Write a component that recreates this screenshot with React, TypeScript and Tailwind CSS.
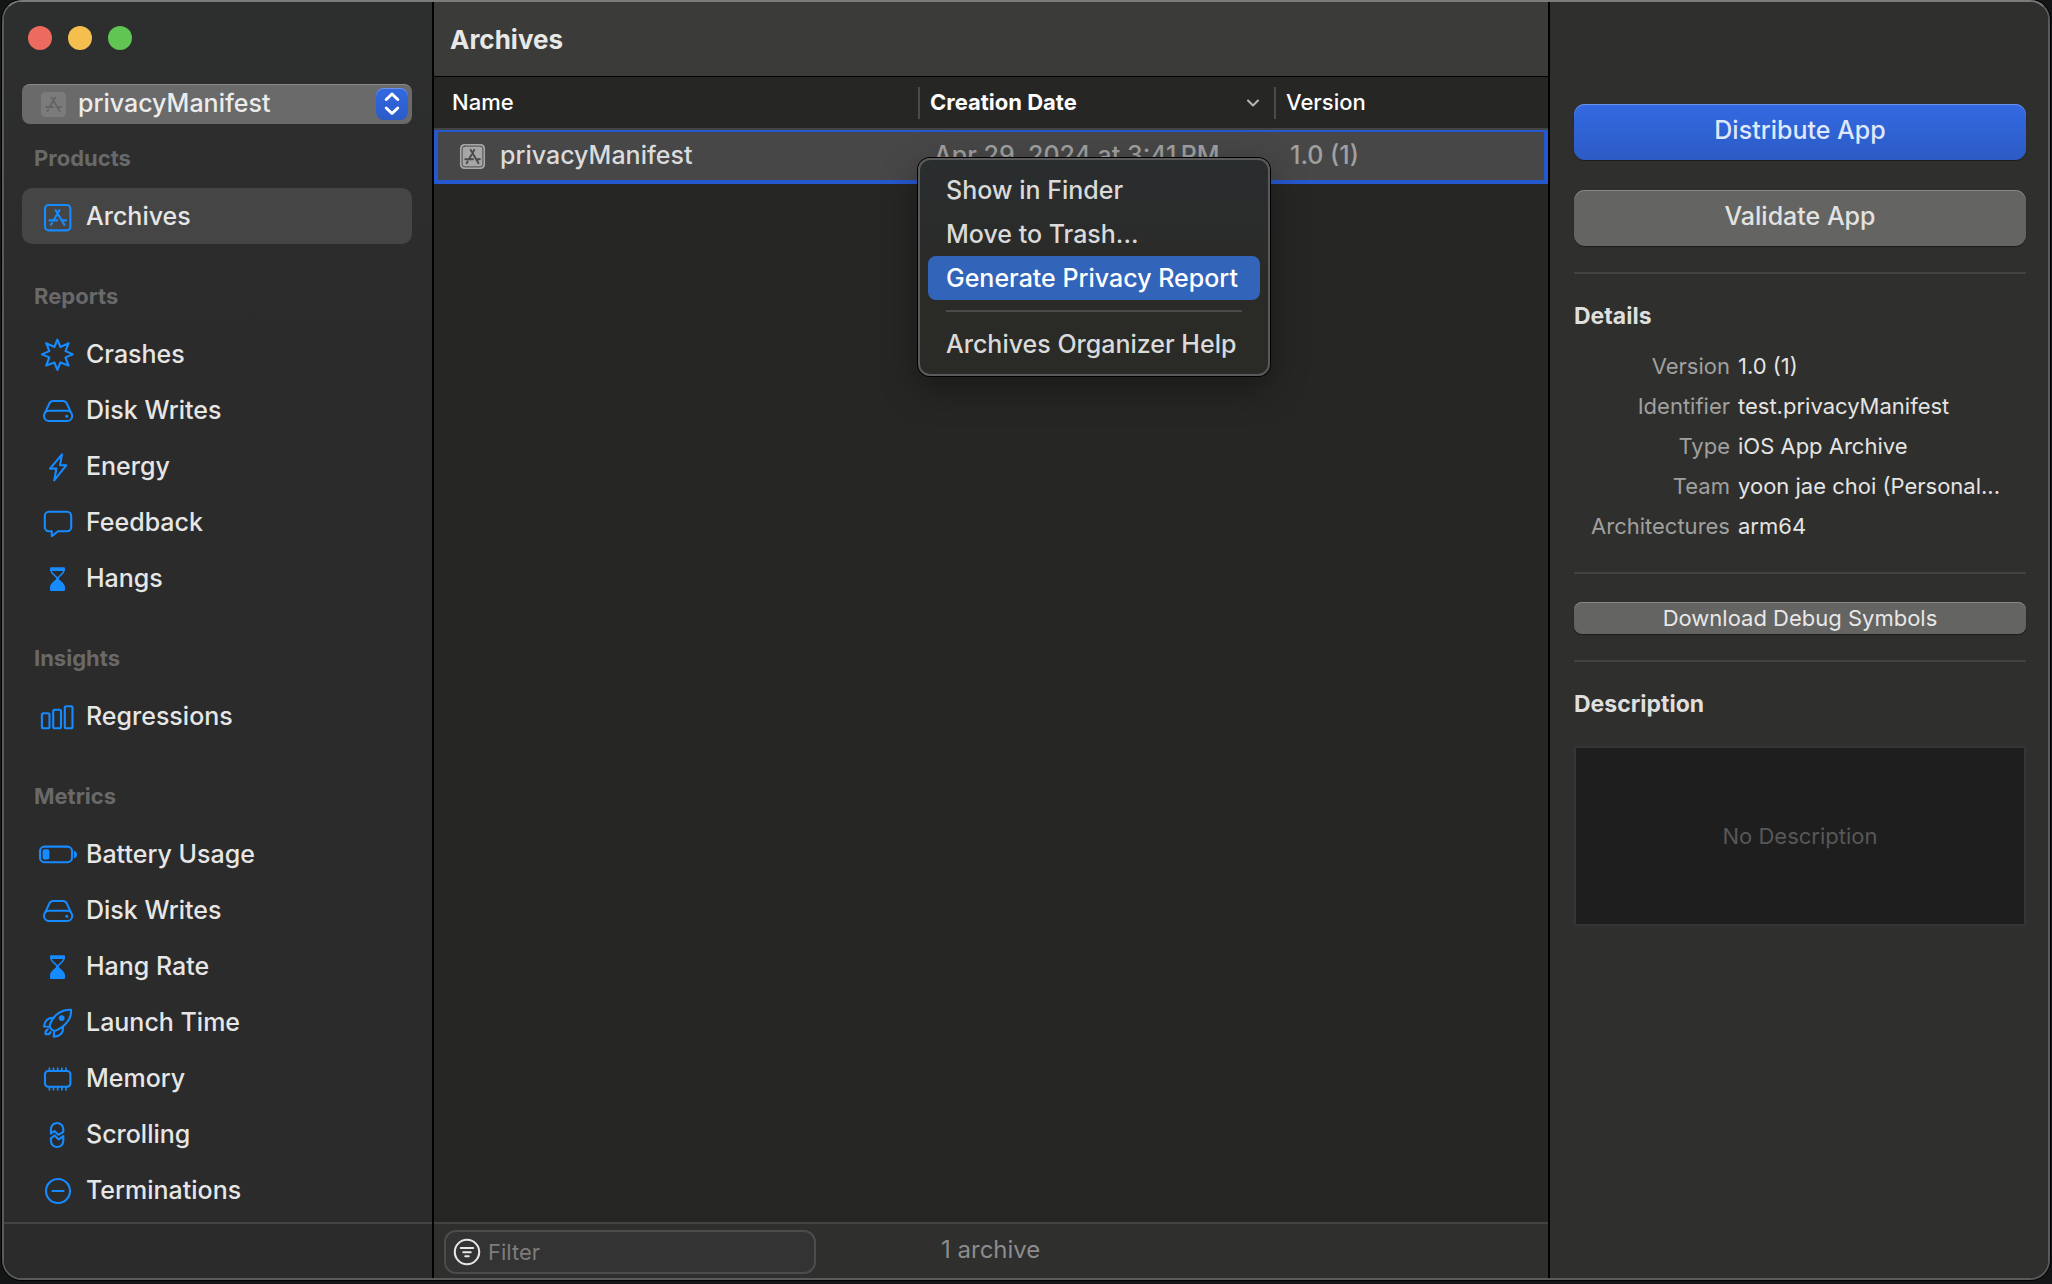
import { useState, type ReactNode } from 'react';
import { ChevronDown } from 'lucide-react';

type IconName =
  | 'archive'
  | 'burst'
  | 'disk'
  | 'bolt'
  | 'bubble'
  | 'hourglass'
  | 'bars'
  | 'battery'
  | 'rocket'
  | 'memory'
  | 'scroll'
  | 'minus';

const appGlyph = (
  <path d="M23.4 16.2 17.6 26.2M16 29.2l-1 1.6M19.7 16.2l8.6 14.6M13.4 26.4h7.8M25.6 26.4h4.4" />
);

const iconShapes: Record<IconName, ReactNode> = {
  archive: (
    <>
      <rect x="9" y="11" width="25.4" height="25.4" rx="3.5" />
      {appGlyph}
    </>
  ),
  burst: (
    <path d="M21.4 7.6l3 7.4 8.2-3.9-3.1 8 7.4 3.3-7.4 3 3.1 8.2-8.2-3.1-3 7.4-3-7.4-8.2 3.1 3.1-8.2-7.4-3 7.4-3.3-3.1-8 8.2 3.9z" />
  ),
  disk: (
    <>
      <rect x="8" y="22.8" width="28.2" height="10.2" rx="5.1" />
      <path d="M9.2 24.6 13.4 15.4Q14.5 13 17.2 13h9.8q2.7 0 3.8 2.4l4.2 9.2" />
      <circle cx="30.8" cy="28.2" r="1.5" fill="currentColor" stroke="none" />
    </>
  ),
  bolt: <path d="M26 10.4 14 24.6h6.4L18.2 36.4 30.4 21.2H24z" />,
  bubble: (
    <path d="M13 11.8h18a4.2 4.2 0 0 1 4.2 4.2v11a4.2 4.2 0 0 1-4.2 4.2h-9l-6.2 5v-5H13A4.2 4.2 0 0 1 8.8 27V16a4.2 4.2 0 0 1 4.2-4.2z" />
  ),
  hourglass: (
    <>
      <path d="M14 12.4q0-1.1 1.1-1.1h12.8q1.1 0 1.1 1.1V15H14z" fill="currentColor" stroke="none" />
      <path d="M15 14.6c0 4 6 5 6 8.2M28 14.6c0 4-6 5-6 8.2" strokeWidth="1.5" />
      <path
        d="M21.5 21.6c1.4 2.8 7.5 5.4 7.5 10V34q0 1.1-1.1 1.1H15.1q-1.1 0-1.1-1.1v-2.4c0-4.6 6.100-7.200 7.500-10z"
        fill="currentColor"
        stroke="none"
      />
    </>
  ),
  bars: (
    <>
      <rect x="5.9" y="19.2" width="7.6" height="15" rx="1.5" />
      <rect x="17.2" y="15.7" width="7.8" height="18.5" rx="1.5" />
      <rect x="28.8" y="12.2" width="7.7" height="22" rx="1.5" />
    </>
  ),
  battery: (
    <>
      <rect x="4" y="14.6" width="32" height="15.6" rx="4.5" />
      <rect x="6.6" y="17.2" width="6.8" height="10.4" rx="1.8" fill="currentColor" stroke="none" />
      <path d="M38 18.7c4 1 4 6.6 0 7.6z" fill="currentColor" stroke="none" />
    </>
  ),
  rocket: (
    <>
      <path d="M35 9.8c-8.600-.8-16 4.200-20 12.200-1.300 2.600-1.900 4.500-.6 6.200s3.200 3.200 5.400 2.400C29 26.800 35.800 19 35 9.800z" />
      <path d="M18 17.8c-5.600-.2-9.300 2.400-10 8.700l5.700.3M27 27.300c.5 5.500-3 9-9.300 9.400l.5-5.500" />
      <path d="M11.8 29.400c-2.300 1-2.600 2.800-2.300 4.800 2.200.3 4.600.1 5-2.200" />
      <circle cx="25.7" cy="18.1" r="2.9" fill="currentColor" stroke="none" />
    </>
  ),
  memory: (
    <>
      <rect x="9" y="15" width="25.4" height="15.8" rx="3.2" />
      <path
        d="M13.4 12.200v2.800M17.500 12.200v2.800M21.700 12.200v2.800M25.900 12.200v2.800M30 12.200v2.800M13.400 31v2.800M17.500 31v2.800M21.700 31v2.800M25.900 31v2.800M30 31v2.800"
        strokeWidth="1.7"
      />
    </>
  ),
  scroll: (
    <>
      <path d="M14.9 21.600v-4.400a6.200 6.200 0 0 1 12.400 0v2.800l-5 2.800-3.900-3.800z" />
      <path d="M14.900 26.400v2.400a6.200 6.200 0 0 0 12.400 0v-4.700l-4.600 3.300-4.100-4z" />
    </>
  ),
  minus: (
    <>
      <circle cx="22" cy="23" r="12" />
      <path d="M16.5 23h11" strokeWidth="2.2" />
    </>
  ),
};

function SidebarIcon({ name }: { name: IconName }) {
  return (
    <svg
      viewBox="0 0 44 44"
      className="h-11 w-11 shrink-0 text-[#168bff]"
      fill="none"
      stroke="currentColor"
      strokeWidth="2.1"
      strokeLinecap="round"
      strokeLinejoin="round"
      aria-hidden="true"
    >
      {iconShapes[name]}
    </svg>
  );
}

type Item = { id: string; label: string; icon: IconName };

const groups: { title: string; items: Item[] }[] = [
  {
    title: 'Products',
    items: [{ id: 'archives', label: 'Archives', icon: 'archive' }],
  },
  {
    title: 'Reports',
    items: [
      { id: 'crashes', label: 'Crashes', icon: 'burst' },
      { id: 'disk-reports', label: 'Disk Writes', icon: 'disk' },
      { id: 'energy', label: 'Energy', icon: 'bolt' },
      { id: 'feedback', label: 'Feedback', icon: 'bubble' },
      { id: 'hangs', label: 'Hangs', icon: 'hourglass' },
    ],
  },
  {
    title: 'Insights',
    items: [{ id: 'regressions', label: 'Regressions', icon: 'bars' }],
  },
  {
    title: 'Metrics',
    items: [
      { id: 'battery', label: 'Battery Usage', icon: 'battery' },
      { id: 'disk-metrics', label: 'Disk Writes', icon: 'disk' },
      { id: 'hang-rate', label: 'Hang Rate', icon: 'hourglass' },
      { id: 'launch', label: 'Launch Time', icon: 'rocket' },
      { id: 'memory', label: 'Memory', icon: 'memory' },
      { id: 'scrolling', label: 'Scrolling', icon: 'scroll' },
      { id: 'terminations', label: 'Terminations', icon: 'minus' },
    ],
  },
];

const details = [
  ['Version', '1.0 (1)'],
  ['Identifier', 'test.privacyManifest'],
  ['Type', 'iOS App Archive'],
  ['Team', 'yoon jae choi (Personal...'],
  ['Architectures', 'arm64'],
];

function Sidebar() {
  const [selected, setSelected] = useState('archives');

  return (
    <aside className="flex w-[430px] shrink-0 flex-col border-r-2 border-black bg-[#2b2b2b] bg-linear-to-b from-[#2d2f2e] to-[#2b2b2b] to-25%">
      {/* Window controls */}
      <div className="flex gap-4 px-6 pt-6">
        <button aria-label="Close" className="size-6 rounded-full bg-[#ec6a5e]" />
        <button aria-label="Minimize" className="size-6 rounded-full bg-[#f4bf4f]" />
        <button aria-label="Zoom" className="size-6 rounded-full bg-[#61c554]" />
      </div>

      {/* Product picker */}
      <div className="relative mt-[34px] mr-5 ml-[18px]">
        <select
          aria-label="Product"
          className="block h-10 w-full appearance-none rounded-lg border-t border-[#8a8b8a] bg-[#6a6a6a] pb-1 pl-14 text-[25px] leading-8 font-medium text-[#ececec]"
        >
          <option>privacyManifest</option>
        </select>
        <svg
          viewBox="8 10 27.4 27.4"
          className="pointer-events-none absolute top-2 left-[19px] size-[25px]"
          fill="none"
          stroke="#646464"
          strokeWidth="2"
          strokeLinecap="round"
          aria-hidden="true"
        >
          <rect x="8" y="10" width="27.4" height="27.4" rx="5" fill="#7b7b7b" stroke="none" />
          {appGlyph}
        </svg>
        <span className="pointer-events-none absolute top-1 right-1 flex size-8 items-center justify-center rounded-lg bg-linear-to-b from-[#3369e2] to-[#2b5bc8] shadow-[inset_0_1px_0_#6f93ea]">
          <svg
            viewBox="0 0 32 32"
            className="size-8"
            fill="none"
            stroke="white"
            strokeWidth="3"
            strokeLinecap="round"
            strokeLinejoin="round"
            aria-hidden="true"
          >
            <path d="M10.200 11.500 16 6l5.800 5.500M10.200 20 16 25.500l5.800-5.500" />
          </svg>
        </span>
      </div>

      <nav className="min-h-0 flex-1 overflow-hidden pr-5 pl-[18px]">
        {groups.map((group, i) => (
          <section key={group.title}>
            <h2
              className={`${i === 0 ? 'pt-[22px]' : 'pt-10'} pb-[18px] pl-3 text-[22px] leading-6 font-bold text-[#696969]`}
            >
              {group.title}
            </h2>
            {group.items.map((item) => (
              <button
                key={item.id}
                onClick={() => setSelected(item.id)}
                className={`flex h-14 w-full items-center gap-1.5 rounded-[10px] pl-3.5 text-left text-[25px] font-medium text-[#e6e6e6] ${
                  selected === item.id ? 'bg-[#444544]' : ''
                }`}
              >
                <SidebarIcon name={item.icon} />
                <span className="pt-0.5">{item.label}</span>
              </button>
            ))}
          </section>
        ))}
      </nav>
      <div className="h-14 shrink-0 border-t-2 border-[#434343]" />
    </aside>
  );
}

function ContextMenu() {
  const item =
    'h-11 w-full rounded-lg px-[18px] pt-0.5 text-left text-[25px] font-medium whitespace-nowrap';
  return (
    <div
      role="menu"
      className="absolute top-[156px] left-[484px] w-[352px] rounded-xl border-2 border-[#595a59] bg-linear-to-b from-[#2a2d2f] to-[#2a2b27] to-60% p-2 shadow-[0_0_0_1px_#000,0_12px_36px_rgba(0,0,0,0.35)]"
    >
      <button role="menuitem" className={`${item} text-[#dadada]`}>Show in Finder</button>
      <button role="menuitem" className={`${item} text-[#dadada]`}>Move to Trash...</button>
      <button role="menuitem" className={`${item} bg-[#3265ba] text-white`}>Generate Privacy Report</button>
      <hr className="mx-[18px] my-2.5 border-t-2 border-[#4a4b48]" />
      <button role="menuitem" className={`${item} text-[#dadada]`}>Archives Organizer Help</button>
    </div>
  );
}

function ArchiveList() {
  const th = 'h-[53px] border-b-2 border-[#434343] p-0 text-left';
  const td = 'h-[54px] border-t-2 border-b-4 border-[#2558cf] bg-[#474747] p-0';
  return (
    <main className="relative flex min-w-0 flex-1 flex-col bg-[#262625]">
      <header className="flex h-[75px] shrink-0 items-center border-b border-black bg-[#3b3b39] px-4">
        <h1 className="text-[26px] font-bold text-[#e8e8e7]">Archives</h1>
      </header>

      <div className="min-h-0 flex-1">
        <table className="w-full table-fixed border-separate border-spacing-0">
          <colgroup>
            <col className="w-[484px]" />
            <col className="w-[356px]" />
            <col />
          </colgroup>
          <thead className="text-[22px] text-white">
            <tr>
              <th className={`${th} pl-[18px] font-medium`}>Name</th>
              <th className={th}>
                <div className="flex h-8 items-center justify-between border-l-2 border-[#4b4b4a] pr-[11px] pl-2.5 font-bold">
                  Creation Date
                  <ChevronDown className="size-5 text-[#b5b5b5]" strokeWidth={2.5} aria-hidden="true" />
                </div>
              </th>
              <th className={th}>
                <div className="flex h-8 items-center border-l-2 border-[#4b4b4a] pl-2.5 font-medium">Version</div>
              </th>
            </tr>
          </thead>
          <tbody className="text-[25px] font-medium text-[#a0a0a0]">
            <tr>
              <td className={`${td} border-l-4 pl-[21px]`}>
                <div className="flex items-center gap-3.5 text-[#dbdbdb]">
                  <svg
                    viewBox="0 0 28 28"
                    className="size-[27px]"
                    fill="none"
                    stroke="#4a4a4a"
                    strokeWidth="2"
                    strokeLinecap="round"
                    aria-hidden="true"
                  >
                    <rect x="1" y="1" width="26" height="26" rx="4.5" fill="#a6a6a6" stroke="none" />
                    <rect x="3.2" y="3.2" width="21.6" height="21.6" rx="3" strokeWidth="1" />
                    <path d="M15.800 7.200 10.400 16.700M9 19.300l-1 1.600M12.200 7.200l8 13.700M6.500 16.900h8M18.200 16.900h3.400" />
                  </svg>
                  privacyManifest
                </div>
              </td>
              <td className={`${td} pl-4`}>Apr 29, 2024 at 3:41{'\u202f'}PM</td>
              <td className={`${td} border-r-4 pl-4`}>1.0 (1)</td>
            </tr>
          </tbody>
        </table>
      </div>

      <footer className="flex h-14 shrink-0 items-center border-t-2 border-[#434342] bg-[#2f2f2e] px-2.5 pt-0.5">
        <label className="flex h-11 w-[372px] items-center gap-[7px] rounded-xl border-2 border-[#4c4c4c] bg-[#333333] px-[7px]">
          <svg
            viewBox="0 0 28 28"
            className="size-7 shrink-0"
            fill="none"
            stroke="#e6e6e6"
            strokeWidth="2.1"
            strokeLinecap="round"
            aria-hidden="true"
          >
            <circle cx="14" cy="14" r="12.2" />
            <path d="M7.800 10h12.400M10.300 14.200h7.400M12.300 18.300h3.400" />
          </svg>
          <input
            type="text"
            aria-label="Filter"
            placeholder="Filter"
            className="w-full bg-transparent text-[22px] text-[#e6e6e6] outline-none placeholder:text-[#7c7c7c]"
          />
        </label>
        <p className="pb-1 pl-[125px] text-[24px] text-[#8c8c8c]">1 archive</p>
      </footer>
      <ContextMenu />
    </main>
  );
}

function Inspector() {
  return (
    <aside className="flex w-[500px] shrink-0 flex-col border-l-2 border-black bg-[#2f2f2d] pt-[102px] pr-[22px] pl-6">
      <button className="h-14 rounded-[11px] bg-linear-to-b from-[#3369e2] to-[#2c5bc6] pb-0.5 text-[25px] font-medium text-[#dfe7fb] shadow-[inset_0_1px_0_#6d92ec,0_1px_1px_#1c1c1c]">
        Distribute App
      </button>
      <button className="mt-[30px] h-14 rounded-[11px] bg-[#646462] pb-0.5 text-[25px] font-medium text-[#e2e2e1] shadow-[inset_0_1px_0_#888886,0_1px_1px_#1c1c1c]">
        Validate App
      </button>

      <hr className="mt-[26px] border-t-2 border-[#434341]" />

      <h2 className="pt-[26px] text-[23px] leading-8 font-bold text-[#dfdfde]">Details</h2>
      <dl className="mt-[14px] grid grid-cols-[156px_1fr] gap-x-2 text-[22px] leading-10">
        {details.map(([label, value]) => (
          <div key={label} className="contents">
            <dt className="text-right text-[#a0a09f]">{label}</dt>
            <dd className="whitespace-nowrap text-[#e4e4e3]">{value}</dd>
          </div>
        ))}
      </dl>

      <hr className="mt-[26px] border-t-2 border-[#434341]" />
      <button className="mt-7 h-8 rounded-lg bg-[#646462] text-[22px] leading-8 text-[#e8e8e7] shadow-[inset_0_1px_0_#888886,0_1px_1px_#1c1c1c]">
        Download Debug Symbols
      </button>
      <hr className="mt-[26px] border-t-2 border-[#434341]" />

      <h2 className="pt-[26px] text-[23px] leading-8 font-bold text-[#dfdfde]">Description</h2>
      <div className="mt-[26px] flex h-[180px] items-center justify-center border-2 border-[#353536] bg-[#1e1e1e] text-[22px] text-[#575757]">
        No Description
      </div>
    </aside>
  );
}

export default function App() {
  return (
    <div className="h-screen bg-[#141516] px-0.5 pb-1 font-['Inter','Liberation_Sans',sans-serif]">
      <div className="flex h-full overflow-hidden rounded-[20px] border-2 border-t-[#7b7b7b] border-r-[#5a5a5a] border-b-[#5a5a5a] border-l-[#5a5a5a] shadow-[0_0_0_1px_#000]">
        <Sidebar />
        <ArchiveList />
        <Inspector />
      </div>
    </div>
  );
}
